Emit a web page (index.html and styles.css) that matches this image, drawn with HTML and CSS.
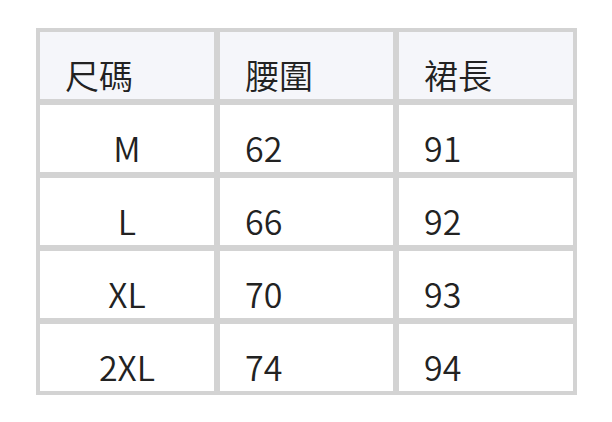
FILE: index.html
```html
<!DOCTYPE html>
<html lang="zh-Hant">
<head>
<meta charset="utf-8">
<link rel="stylesheet" href="styles.css">
</head>
<body>
<div class="size-table">
  <div class="cell head">尺碼</div>
  <div class="cell head">腰圍</div>
  <div class="cell head">裙長</div>
  <div class="cell center">M</div>
  <div class="cell">62</div>
  <div class="cell">91</div>
  <div class="cell center">L</div>
  <div class="cell">66</div>
  <div class="cell">92</div>
  <div class="cell center">XL</div>
  <div class="cell">70</div>
  <div class="cell">93</div>
  <div class="cell center">2XL</div>
  <div class="cell">74</div>
  <div class="cell">94</div>
</div>
</body>
</html>
```
FILE: styles.css
```css
html, body {
  margin: 0;
  background: #ffffff;
}
body {
  padding: 28px 0 0 36px;
  font-family: "Noto Sans CJK TC", "Noto Sans", sans-serif;
  color: #222222;
}
.size-table {
  display: grid;
  grid-template-columns: 174px 173px 174px;
  grid-auto-rows: 67px;
  gap: 6px;
  padding: 4px;
  box-sizing: border-box;
  width: 541px;
  background: #d3d3d3;
}
.cell {
  background: #ffffff;
  font-size: 34px;
  font-weight: 350;
  line-height: 49px;
  padding: 18px 0 0 25px;
  box-sizing: border-box;
  white-space: nowrap;
}
.cell.head {
  background: #f5f6fa;
}
.cell.center {
  text-align: center;
  padding-left: 0;
}
```
